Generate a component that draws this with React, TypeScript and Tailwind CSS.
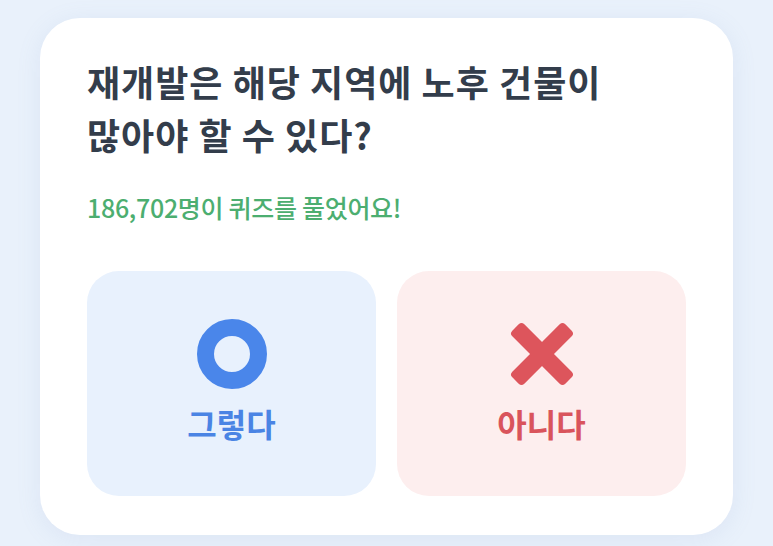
const App: React.FC = () => {
  return (
    <div
      className="w-[773px] h-[546px] bg-[#e9f1fb] pt-[18px] px-[40px] overflow-hidden"
      style={{ fontFamily: '"Noto Sans CJK KR", "Noto Sans", sans-serif' }}
    >
      <section className="bg-white rounded-[40px] h-[517px] px-[47px] pt-[37px] shadow-[0_4px_24px_rgba(120,150,200,0.12)]">
        <h1 className="text-[36px] leading-[53px] font-bold text-[#333d4b] tracking-[1px]">
          재개발은 해당 지역에 노후 건물이
          <br />
          많아야 할 수 있다?
        </h1>
        <p className="mt-[30px] text-[25px] leading-[32px] font-medium text-[#4cae70] tracking-[-0.3px]">
          186,702명이 퀴즈를 풀었어요!
        </p>

        <div className="mt-[48px] flex gap-[21px]">
          <button className="w-[289px] h-[225px] rounded-[32px] bg-[#e8f1fd] flex flex-col items-center justify-center">
            <svg width="70" height="70" viewBox="0 0 70 70" className="mt-[-6px]">
              <circle cx="35" cy="35" r="26.5" fill="none" stroke="#4a86ea" strokeWidth="17" />
            </svg>
            <span className="mt-[14px] text-[32px] leading-[40px] font-bold text-[#4a84e4]">그렇다</span>
          </button>
          <button className="w-[289px] h-[225px] rounded-[32px] bg-[#fdeeee] flex flex-col items-center justify-center">
            <svg width="70" height="70" viewBox="0 0 70 70" className="mt-[-6px]">
              <rect x="26.5" y="-2.5" width="17" height="75" rx="4" fill="#dd555c" transform="rotate(45 35 35)" />
              <rect x="26.5" y="-2.5" width="17" height="75" rx="4" fill="#dd555c" transform="rotate(-45 35 35)" />
            </svg>
            <span className="mt-[14px] text-[32px] leading-[40px] font-bold text-[#d9545c]">아니다</span>
          </button>
        </div>
      </section>
    </div>
  );
};

export default App;
